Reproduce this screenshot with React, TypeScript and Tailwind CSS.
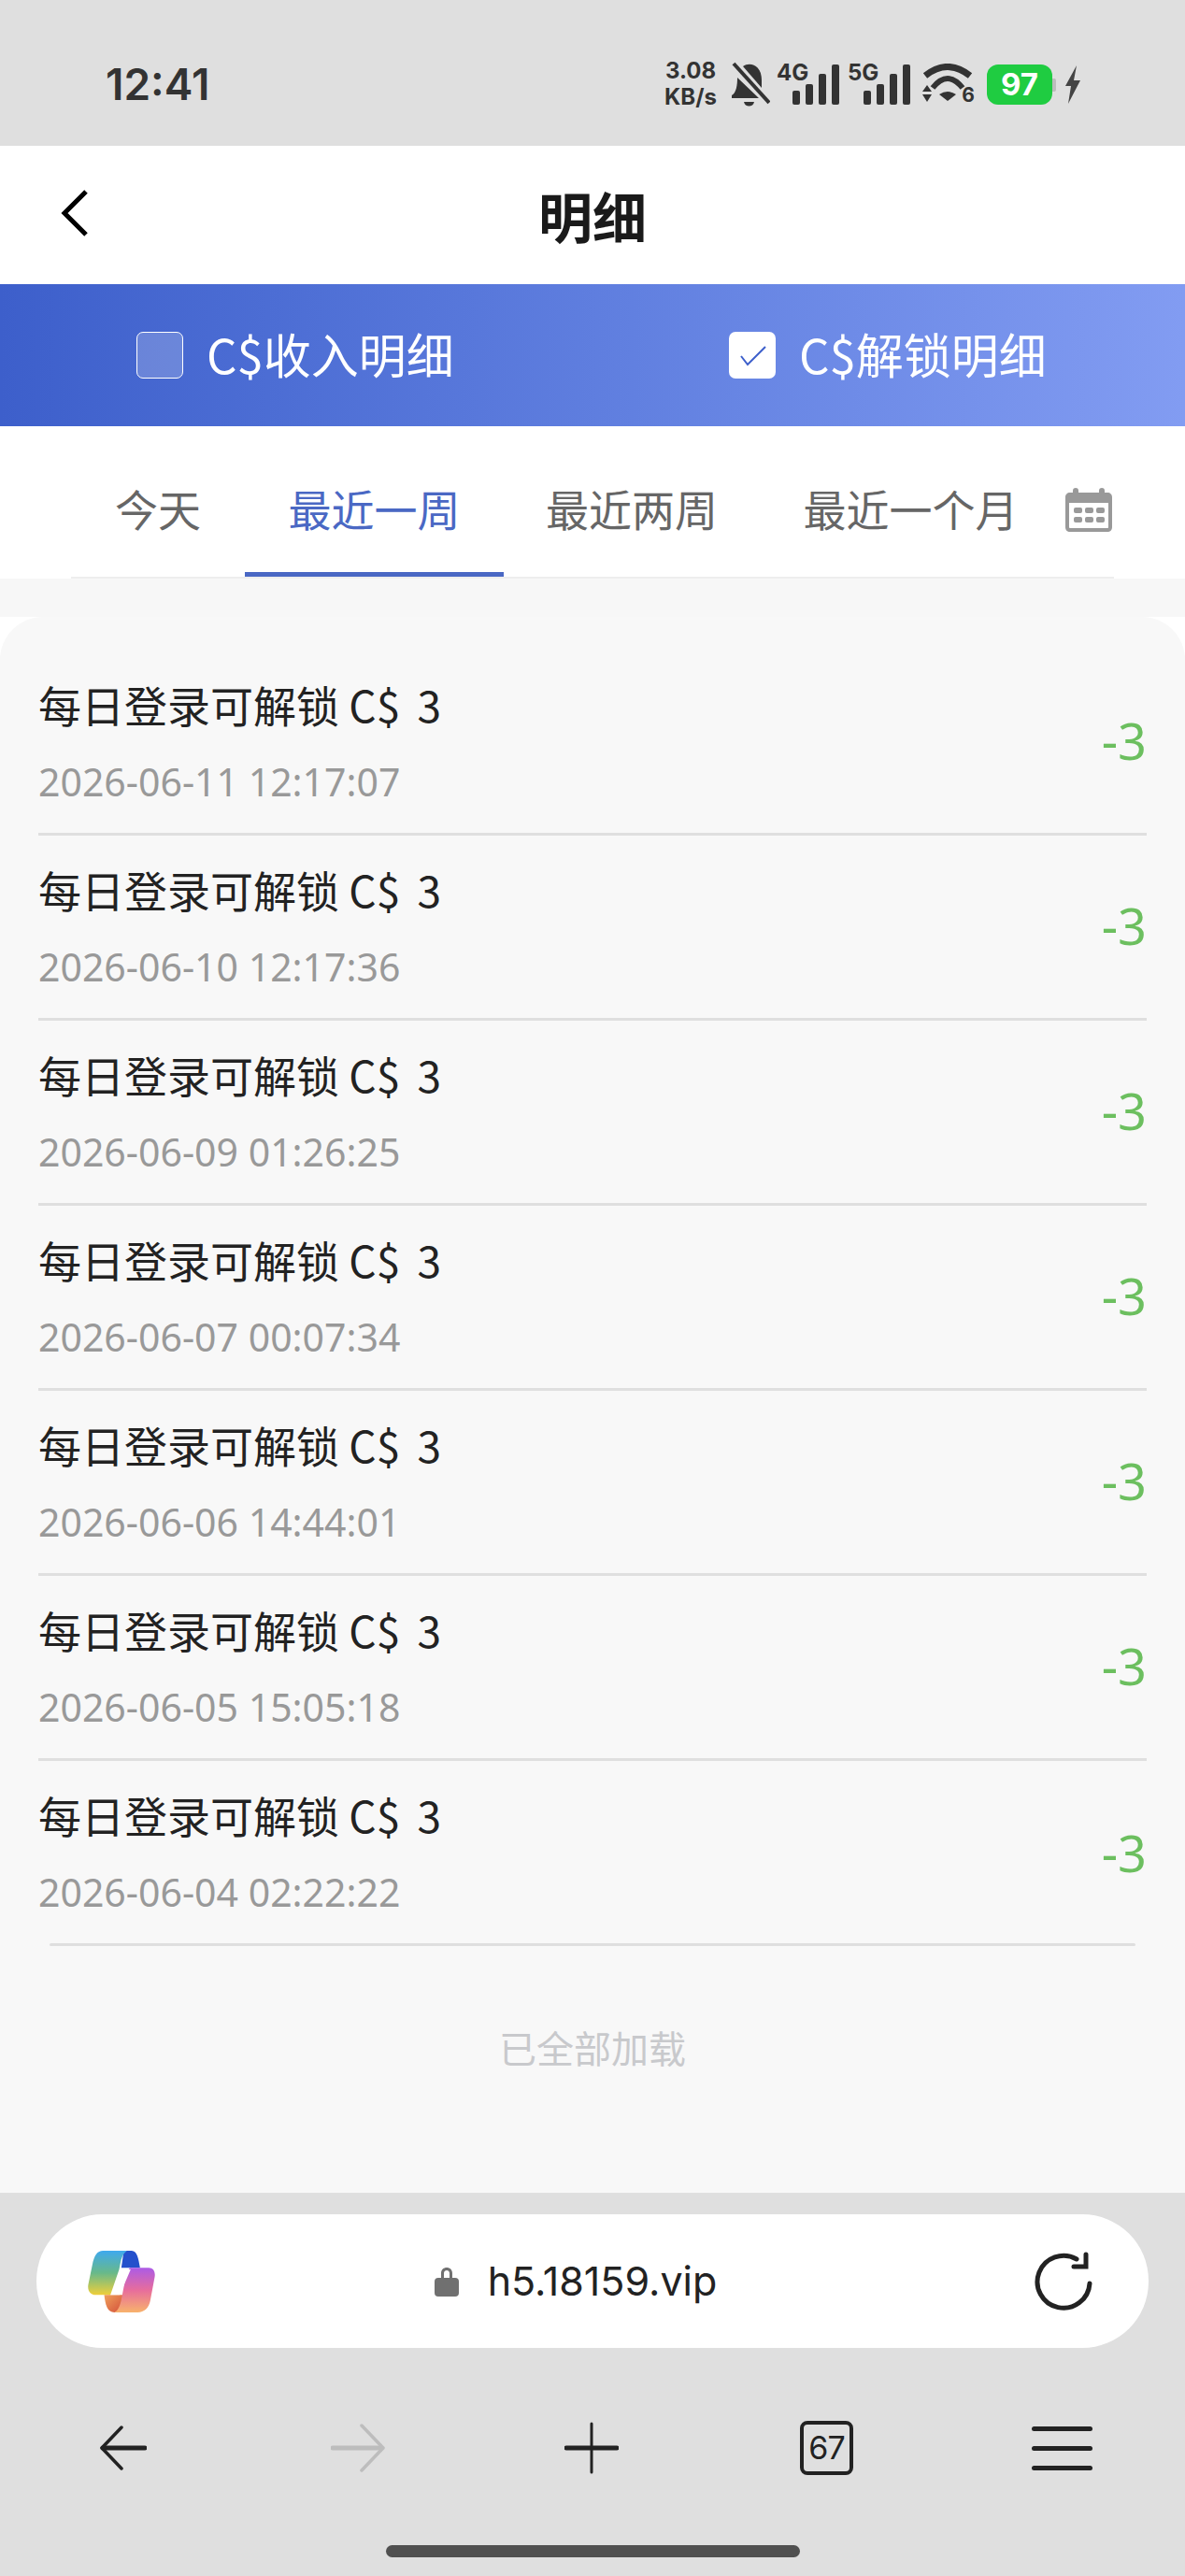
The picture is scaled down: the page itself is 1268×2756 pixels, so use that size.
const records = [
  '2026-06-11 12:17:07',
  '2026-06-10 12:17:36',
  '2026-06-09 01:26:25',
  '2026-06-07 00:07:34',
  '2026-06-06 14:44:01',
  '2026-06-05 15:05:18',
  '2026-06-04 02:22:22',
];

function Signal({ label, className }: { label: string; className: string }) {
  return (
    <div className={`relative h-[48px] w-[67px] ${className}`}>
      <span className='absolute left-0 top-[-2px] font-["Inter",sans-serif] text-[24px] font-bold leading-[28px]'>{label}</span>
      <div className="absolute bottom-[2px] right-0 flex items-end gap-[6px]">
        <span className="h-[15px] w-[8px] rounded-[2px] bg-[#333]" />
        <span className="h-[22px] w-[8px] rounded-[2px] bg-[#333]" />
        <span className="h-[33px] w-[8px] rounded-[2px] bg-[#333]" />
        <span className="h-[43px] w-[8px] rounded-[2px] bg-[#333]" />
      </div>
    </div>
  );
}

function StatusBar() {
  return (
    <div className="flex h-[156px] items-center justify-between bg-[#dfdfdf] pl-[113px] pr-[111px] pt-[24px] text-[#333]">
      <span className='font-["Inter",sans-serif] text-[46px] font-semibold leading-none'>12:41</span>
      <div className="flex items-center">
        <div className='flex flex-col items-center font-["Inter",sans-serif] text-[24px] font-bold leading-[28px]'>
          <span>3.08</span>
          <span>KB/s</span>
        </div>
        <svg width="42" height="49" viewBox="0 0 42 49" className="ml-[15px]" fill="#333">
          <path d="M13 5C20 0 33 3 33 20v8z" />
          <path d="M7 17l23 22H1v-3c5-3 6-11 6-19z" />
          <path d="M14 43h11c-1 6-10 6-11 0z" />
          <path d="M3 2l38 42" stroke="#333" strokeWidth="4" />
        </svg>
        <Signal label="4G" className="ml-[7px]" />
        <Signal label="5G" className="ml-[9px]" />
        <div className="relative ml-[13px] h-[44px] w-[56px]">
          <svg width="56" height="44" viewBox="0 0 56 44" fill="#333">
            <path d="M3 13Q27-6 51 13" fill="none" stroke="#333" strokeWidth="7" />
            <path d="M11 26Q27 6 43 26" fill="none" stroke="#333" strokeWidth="6" />
            <path d="M18 33q9-6 18 0l-9 7z" />
            <path d="M0 30l5-7 5 7zM0 33h10l-5 8z" />
          </svg>
          <span className='absolute bottom-0 right-0 font-["Inter",sans-serif] text-[21px] font-bold leading-[20px]'>6</span>
        </div>
        <div className="relative ml-[13px] flex h-[43px] w-[70px] items-center justify-center rounded-[12px] bg-[#1fcc41] font-['Inter',sans-serif] text-[33px] font-bold leading-none text-white">
          97
          <span className="absolute right-[-4px] top-[15px] h-[14px] w-[4px] rounded-r-[2px] bg-[#bdbdbd]" />
        </div>
        <svg width="18" height="41" viewBox="0 0 18 41" className="ml-[13px]" fill="#444">
          <path d="M13 0L1 22h6L4 41 17 16h-7z" />
        </svg>
      </div>
    </div>
  );
}

function Banner() {
  return (
    <div className="flex h-[152px] items-center bg-gradient-to-r from-[#3d5fcb] to-[#829cf2] pl-[146px] text-white">
      <div className="flex w-[634px] items-center">
        <span className="h-[50px] w-[50px] rounded-[7px] border border-white bg-white/20" />
        <span className="ml-[25px] pb-[4px] text-[51px] leading-none">C$收入明细</span>
      </div>
      <div className="flex items-center">
        <span className="flex h-[50px] w-[50px] items-center justify-center rounded-[7px] bg-white">
          <svg width="30" height="30" viewBox="0 0 30 30" fill="none" stroke="#3d5fcb" strokeWidth="2">
            <path d="M3 16l7 9L29 6" />
          </svg>
        </span>
        <span className="ml-[25px] pb-[4px] text-[51px] leading-none">C$解锁明细</span>
      </div>
    </div>
  );
}

function Tabs() {
  const tabs = [
    { label: '今天', width: 'w-[186px]', active: false },
    { label: '最近一周', width: 'w-[277px]', active: true },
    { label: '最近两周', width: 'w-[274px]', active: false },
    { label: '最近一个月', width: 'w-[323px]', active: false },
  ];
  return (
    <div className="h-[163px] bg-white pl-[76px] pr-[76px]">
      <div className="flex h-[163px] border-b-2 border-[#eeeeee]">
        {tabs.map((tab) => (
          <div
            key={tab.label}
            className={`relative flex items-center justify-center pt-[14px] text-[46px] ${tab.width} ${tab.active ? 'text-[#4a68c4]' : 'text-[#666]'}`}
          >
            {tab.label}
            {tab.active && <span className="absolute bottom-0 left-0 h-[5px] w-full bg-[#4a68c4]" />}
          </div>
        ))}
        <div className="ml-[4px] flex items-center pt-[18px]">
          <svg width="50" height="47" viewBox="0 0 50 47" fill="#999">
            <path d="M11 0c2 0 3 1 3 3v2h22V3c0-2 1-3 3-3s3 1 3 3v2h3c3 0 5 2 5 5v32c0 3-2 5-5 5H5c-3 0-5-2-5-5V10c0-3 2-5 5-5h3V3c0-2 1-3 3-3z" />
            <path fill="#fff" d="M4 16h42v26c0 1-1 1-1 1H5s-1 0-1-1z" />
            <rect x="9" y="21" width="9" height="6" rx="2" />
            <rect x="21" y="21" width="9" height="6" rx="2" />
            <rect x="33" y="21" width="9" height="6" rx="2" />
            <rect x="9" y="31" width="9" height="6" rx="2" />
            <rect x="21" y="31" width="9" height="6" rx="2" />
            <rect x="33" y="31" width="9" height="6" rx="2" />
          </svg>
        </div>
      </div>
    </div>
  );
}

function Record({ time, last }: { time: string; last: boolean }) {
  return (
    <div className={`flex h-[198px] justify-between ${last ? '' : 'border-b-[3px] border-[#dfdfdf]'}`}>
      <div className="pt-[27px]">
        <div className="text-[46px] leading-[60px] text-[#222]">
          每日登录可解锁 C$<span className="ml-[8px]"> 3</span>
        </div>
        <div className='mt-[28px] font-["Noto_Sans",sans-serif] text-[41px] leading-[50px] text-[#999]'>{time}</div>
      </div>
      <span className='flex items-center pb-[2px] font-["Noto_Sans",sans-serif] text-[54px] text-[#6cbf5f]'>-3</span>
    </div>
  );
}

function CopilotLogo() {
  return (
    <svg width="72" height="66" viewBox="0 0 215 198">
      <defs>
        <linearGradient id="copilotLeft" x1="0" y1="0" x2="0" y2="1">
          <stop offset="0" stopColor="#3fa9ee" />
          <stop offset="0.5" stopColor="#68b98a" />
          <stop offset="1" stopColor="#efcf3a" />
        </linearGradient>
        <linearGradient id="copilotRight" x1="0" y1="0" x2="0" y2="1">
          <stop offset="0" stopColor="#ac5be6" />
          <stop offset="0.5" stopColor="#e76d9c" />
          <stop offset="1" stopColor="#f8b26c" />
        </linearGradient>
        <linearGradient id="copilotFold" x1="0" y1="0" x2="1" y2="1">
          <stop offset="0" stopColor="#efa05c" />
          <stop offset="1" stopColor="#d4503a" />
        </linearGradient>
      </defs>
      <path d="M115 0h25c18 0 22 25 27 55h-60z" fill="#2450cc" />
      <path d="M48 0h77c-20 15-20 40-25 60L72 142H25C8 142-3 128 1 108l13-63C20 15 30 0 48 0z" fill="url(#copilotLeft)" />
      <path d="M52 142c4 33 10 56 33 56 15 0 23-23 27-56z" fill="url(#copilotFold)" />
      <path d="M137 55h58c15 0 22 13 19 30l-14 75c-5 25-20 38-40 38H85c15-8 20-28 25-56l10-52c5-20 10-35 17-35z" fill="url(#copilotRight)" />
      <path d="M112 60h25l-35 82H72c13-12 18-32 23-57 3-17 7-25 17-25z" fill="#fff" />
    </svg>
  );
}

function BrowserBar() {
  return (
    <div className="flex h-[410px] flex-col bg-[#dfdfdf] pt-[23px]">
      <div className="mx-[39px] flex h-[143px] items-center justify-between rounded-[71px] bg-white pl-[55px] pr-[59px]">
        <CopilotLogo />
        <div className="mr-[40px] flex items-center">
          <svg width="26" height="32" viewBox="0 0 26 32" fill="#707070">
            <path d="M7 13V7c0-8 12-8 12 0v6h-3V7c0-4-6-4-6 0v6z" />
            <rect x="0" y="12" width="26" height="20" rx="4" />
          </svg>
          <span className='ml-[31px] font-["Inter",sans-serif] text-[43px] leading-none text-[#222]'>h5.18159.vip</span>
        </div>
        <svg width="64" height="64" viewBox="0 0 64 64" fill="none" stroke="#222" strokeWidth="5" strokeLinecap="round">
          <path d="M60 34A28 28 0 1 1 46 8" />
          <path d="M56 3v13H43" />
        </svg>
      </div>
      <div className="mt-[78px] flex items-center pl-[107px]">
        <svg width="50" height="48" viewBox="0 0 50 48" fill="none" stroke="#222" strokeLinecap="round" strokeLinejoin="round">
          <path d="M23 2L2 24l21 22" strokeWidth="3.5" />
          <path d="M3 24h45" strokeWidth="5" />
        </svg>
        <svg width="58" height="52" viewBox="0 0 58 52" className="ml-[197px]" fill="none" stroke="#bdbdbd" strokeLinecap="round" strokeLinejoin="round">
          <path d="M33 2l23 24-23 24" strokeWidth="3.5" />
          <path d="M2 26h52" strokeWidth="5" />
        </svg>
        <svg width="58" height="56" viewBox="0 0 58 56" className="ml-[192px]" fill="none" stroke="#222" strokeLinecap="round">
          <path d="M29 2v52" strokeWidth="3" />
          <path d="M2 28h54" strokeWidth="5" />
        </svg>
        <div className="ml-[194px] flex h-[58px] w-[57px] items-center justify-center rounded-[8px] border-[4px] border-[#222] font-['Inter',sans-serif] text-[34px] leading-none tracking-tight text-[#222]">67</div>
        <div className="ml-[191px] flex w-[65px] flex-col gap-[16px]">
          <span className="h-[5px] rounded-full bg-[#222]" />
          <span className="h-[5px] rounded-full bg-[#222]" />
          <span className="h-[5px] rounded-full bg-[#222]" />
        </div>
      </div>
      <div className="mt-[75px] h-[13px] w-[443px] self-center rounded-full bg-[#505050]" />
    </div>
  );
}

export default function App() {
  return (
    <div className='flex h-[2756px] w-[1268px] flex-col overflow-hidden bg-white font-["Noto_Sans_CJK_SC","Noto_Sans",sans-serif]'>
      <StatusBar />
      <div className="relative flex h-[148px] items-center justify-center bg-white">
        <svg width="30" height="50" viewBox="0 0 30 50" className="absolute left-[65px] top-[47px]" fill="none" stroke="#000" strokeWidth="5">
          <path d="M27 2L4 25l23 23" />
        </svg>
        <span className="text-[58px] font-semibold leading-none text-[#1a1a1a]">明细</span>
      </div>
      <Banner />
      <Tabs />
      <div className="h-[41px] bg-[#f7f7f7]" />
      <div className="min-h-0 flex-1">
        <div className="flex h-full flex-col rounded-t-[46px] bg-[#f8f8f8] px-[41px] pt-[36px]">
          {records.map((time, i) => (
            <Record key={time} time={time} last={i === records.length - 1} />
          ))}
          <div className="mx-[12px] mt-[-3px] h-[3px] rounded-full bg-[#dfdfdf]" />
          <div className="pt-[78px] text-center text-[40px] leading-[60px] text-[#c8c9cc]">已全部加载</div>
        </div>
      </div>
      <BrowserBar />
    </div>
  );
}
